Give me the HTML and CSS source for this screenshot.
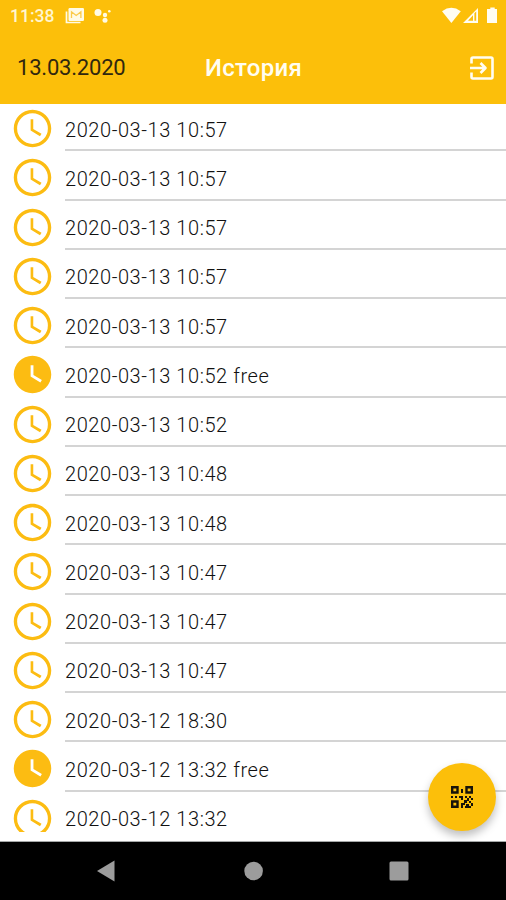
FILE: index.html
```html
<!DOCTYPE html>
<html lang="ru">
<head>
<meta charset="utf-8">
<title>История</title>
<link rel="stylesheet" href="styles.css">
</head>
<body>
<svg class="defs" aria-hidden="true">
  <symbol id="clock" viewBox="0 0 24 24"><path d="M11.99 2C6.47 2 2 6.48 2 12s4.47 10 9.99 10C17.52 22 22 17.52 22 12S17.52 2 11.99 2zM12 20.2a8.2 8.2 0 1 1 0-16.4 8.2 8.2 0 0 1 0 16.4zM12.400 7H11v6l5 3.100.8-1.300-4.400-2.600z"/></symbol>
  <symbol id="clock-filled" viewBox="0 0 24 24"><path fill-rule="evenodd" d="M11.99 2C6.47 2 2 6.48 2 12s4.47 10 9.99 10C17.52 22 22 17.52 22 12S17.52 2 11.99 2zM12.500 7H11v6l5.200 3.200.8-1.300-4.500-2.700z"/></symbol>
</svg>
<div class="screen">
  <header class="top">
    <div class="status">
      <span class="time">11:38</span>
      <svg class="mail" viewBox="0 0 20 16"><path d="M1.500 3.500v11h14" fill="none" stroke="#fffbe6" stroke-width="1.700"/><rect x="3.500" y="0" width="15.500" height="13" rx="1.200" fill="#fffbe6"/><path d="M6.500 10V3.800l4.700 3.600 4.700-3.600V10" fill="none" stroke="#fbcb4c" stroke-width="1.300"/></svg>
      <svg class="dots" viewBox="0 0 18 16"><g fill="#fffbe6"><circle cx="4" cy="4.500" r="3.500"/><circle cx="11" cy="7" r="2.200"/><circle cx="15.300" cy="3.300" r="1.300"/><circle cx="11" cy="12.300" r="2.500"/></g></svg>
      <svg class="signals" viewBox="0 0 56 18"><g fill="#fffdf2"><path d="M0 4.200Q9.400-2.500 18.800 4.200L9.400 16z"/><path fill-rule="evenodd" d="M36 1v15H21zM31 8.200l-5 5.600h5zM32.400 6.200v7.600h1.800V4.500z"/><path d="M46 2h2.300V.5h4.400V2H55v14H45V2z"/></g></svg>
    </div>
    <div class="bar">
      <span class="date">13.03.2020</span>
      <h1>История</h1>
      <svg class="exit" viewBox="0 0 24 24"><path fill="none" stroke="#fffdf2" stroke-width="2.600" stroke-linejoin="round" d="M1.500 7.500V3q0-1.500 1.500-1.500h18q1.500 0 1.500 1.500v18q0 1.500-1.500 1.500H3q-1.500 0-1.500-1.500v-4.500M0 12h15M10.500 7l5 5-5 5"/></svg>
    </div>
  </header>
  <main class="list">
    <div class="row"><svg><use href="#clock"/></svg><span>2020-03-13 10:57</span></div>
    <div class="row"><svg><use href="#clock"/></svg><span>2020-03-13 10:57</span></div>
    <div class="row"><svg><use href="#clock"/></svg><span>2020-03-13 10:57</span></div>
    <div class="row"><svg><use href="#clock"/></svg><span>2020-03-13 10:57</span></div>
    <div class="row"><svg><use href="#clock"/></svg><span>2020-03-13 10:57</span></div>
    <div class="row"><svg><use href="#clock-filled"/></svg><span>2020-03-13 10:52 free</span></div>
    <div class="row"><svg><use href="#clock"/></svg><span>2020-03-13 10:52</span></div>
    <div class="row"><svg><use href="#clock"/></svg><span>2020-03-13 10:48</span></div>
    <div class="row"><svg><use href="#clock"/></svg><span>2020-03-13 10:48</span></div>
    <div class="row"><svg><use href="#clock"/></svg><span>2020-03-13 10:47</span></div>
    <div class="row"><svg><use href="#clock"/></svg><span>2020-03-13 10:47</span></div>
    <div class="row"><svg><use href="#clock"/></svg><span>2020-03-13 10:47</span></div>
    <div class="row"><svg><use href="#clock"/></svg><span>2020-03-12 18:30</span></div>
    <div class="row"><svg><use href="#clock-filled"/></svg><span>2020-03-12 13:32 free</span></div>
    <div class="row"><svg><use href="#clock"/></svg><span>2020-03-12 13:32</span></div>
  </main>
  <button class="fab" aria-label="QR">
    <svg viewBox="0 0 22 22"><g fill="none" stroke="#17130a" stroke-width="2.400"><path d="M1.200 1.200h5.300v5.300H1.200zM15.500 1.200h5.300v5.300h-5.300zM1.200 15.500h5.300v5.300H1.200z"/></g><path fill="#17130a" d="M10 3h2v4h-2zM0 10h2v2H0zM4 10h2v2H4zM8 10h4v4h-2v-2H8zM14 10h2v2h-2zM18 10h2v2h-2zM20 12h2v2h-2zM16 12h2v3h-2zM13 14h3v3h-3zM18 15h2v2h-2zM10 17h4v2h-2v3h-2zM15 18h3v4h-4v-2h1zM20 17h2v3h-2zM18 20h2v2h-2z"/></svg>
  </button>
  <nav class="nav">
    <svg viewBox="0 0 506 58"><g fill="#9c9c9c"><path d="M97 29l17.500-10.500v21z"/><circle cx="253.600" cy="29" r="9.300"/><rect x="389.500" y="19.500" width="19" height="19" rx="1.500"/></g></svg>
  </nav>
</div>
</body>
</html>
```
FILE: styles.css
```css
* { box-sizing: border-box; }
body { margin: 0; background: #fff; font-family: Roboto, "Liberation Sans", sans-serif; }
.defs { display: none; }
.screen { position: relative; display: flex; flex-direction: column; width: 506px; height: 900px; overflow: hidden; }
.top { height: 104px; flex: none; background: #fcbf0a; color: #fffdf2; }
.status { display: flex; align-items: center; height: 32px; padding: 0 8px 0 10px; }
.time { width: 55px; padding-bottom: 1px; font-size: 17.5px; font-weight: 500; color: #fff5cf; }
.mail { width: 20px; height: 16px; }
.dots { width: 18px; height: 16px; margin-left: 9px; }
.signals { width: 56px; height: 18px; margin-left: auto; }
.bar { display: grid; grid-template-columns: 1fr auto 1fr; align-items: center; height: 71px; padding: 0 12px 0 17px; }
.date { font-size: 22px; letter-spacing: -0.2px; color: #30270f; }
.bar h1 { margin: 0 4px 0 0; font-size: 24px; font-weight: 500; letter-spacing: 0.3px; }
.exit { width: 24px; height: 24px; justify-self: end; }
.list { height: 728px; flex: none; overflow: hidden; }
.row { display: flex; align-items: center; height: 49.25px; padding-left: 10px; }
.row:first-child { margin-top: -2px; }
.row svg { width: 45px; height: 45px; margin-right: 10px; margin-top: 4px; flex: none; fill: #fcbc12; }
.row span { display: flex; flex: 1; align-items: center; height: 100%; padding-top: 8px; border-bottom: 2px solid #d4d4d4; font-size: 20px; font-weight: 300; letter-spacing: 0.57px; color: #111; }
.row:last-child span { padding-top: 6px; border-bottom: 0; }
.fab { position: absolute; left: 428px; top: 763px; display: grid; place-items: center; width: 68px; height: 68px; padding: 0; border: 0; border-radius: 50%; background: #fcbf0a; box-shadow: 0 5px 9px rgba(0,0,0,.25); }
.fab svg { width: 22px; height: 22px; }
.nav { height: 59px; margin-top: auto; border-top: 1px solid #a5a8a8; background: #000; }
.nav svg { display: block; width: 506px; height: 58px; }
```
